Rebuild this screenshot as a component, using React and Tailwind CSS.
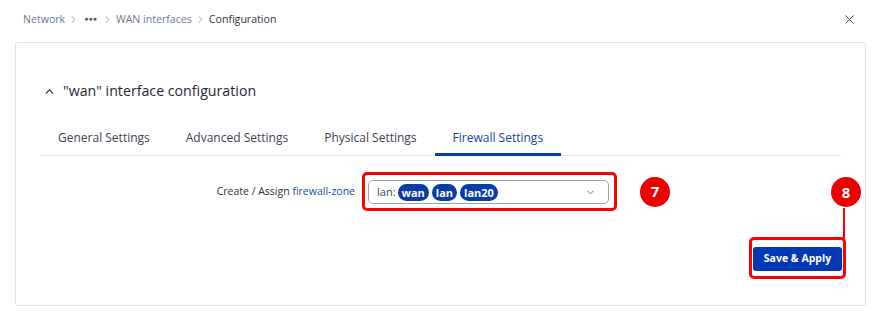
import { FiChevronDown, FiChevronUp, FiChevronRight, FiX } from 'react-icons/fi';

const tabs = ['General Settings', 'Advanced Settings', 'Physical Settings', 'Firewall Settings'];
const zones = ['wan', 'lan', 'lan20'];

const Crumb = ({ children, last }) => (
  <span className={last ? 'text-[#2c3440] font-medium' : 'text-[#6c7a8e]'}>{children}</span>
);

const Sep = () => <FiChevronRight className="w-[11px] h-[11px] text-[#6c7a8e] mx-[3px]" strokeWidth={1.6} />;

export default function App() {
  const active = 3;

  return (
    <div className="w-[878px] h-[324px] bg-white relative font-['Open_Sans',sans-serif] overflow-hidden">
      {/* header */}
      <div className="h-[42px] flex items-start justify-between pl-[23px] pr-[21px] pt-[10px]">
        <div className="flex items-center text-[10.6px] leading-[18px]">
          <Crumb>Network</Crumb>
          <Sep />
          <span className="text-[#4a5566] text-[7px] font-bold px-[2px]">●●●</span>
          <Sep />
          <Crumb>WAN interfaces</Crumb>
          <Sep />
          <Crumb last>Configuration</Crumb>
        </div>
        <button className="mt-[2px] text-[#4b5260]">
          <FiX className="w-[15px] h-[15px]" strokeWidth={1.6} />
        </button>
      </div>

      {/* card */}
      <div className="ml-[15px] w-[851px] h-[264px] border border-[#e0e4ea] rounded-[3px] pt-[37px] px-[24px] relative">
        <div className="flex items-center h-[22px] pl-[3px]">
          <FiChevronUp className="w-[13px] h-[13px] text-[#2c3440] mr-[7px]" strokeWidth={2.4} />
          <span className="text-[14.2px] font-medium text-[#1f2733]">"wan" interface configuration</span>
        </div>

        <div className="mt-[21px] flex border-b border-[#dfe3e9]">
          {tabs.map((t, i) => (
            <div
              key={t}
              className={`px-[18px] pt-[6px] pb-[7px] text-[12px] leading-[17px] border-b-[3px] -mb-[1px] ${
                i === active ? 'border-[#0a3bb0] text-[#183f99]' : 'border-transparent text-[#3a4352]'
              }`}
            >
              {t}
            </div>
          ))}
        </div>

        <div className="mt-[16px] flex items-center">
          <div className="w-[315px] text-right text-[10.5px] text-[#2c3440]">
            Create / Assign <span className="text-[#1d47a3]">firewall-zone</span>
          </div>
          <div className="ml-[7px] border-[3px] border-[#ff0000] rounded-[5px] pl-[3px] pr-[5px] pt-[5px] pb-[4px]">
            <div className="w-[241px] h-[24px] border border-[#98a3b3] rounded-[5px] flex items-center pl-[8px] pr-[12px]">
              <span className="text-[11px] text-[#3a4352] mr-[2px]">lan:</span>
              <div className="flex gap-[3px]">
                {zones.map((z) => (
                  <span
                    key={z}
                    className="h-[17px] px-[4px] rounded-full bg-[#0a3ca8] text-white text-[11px] font-bold leading-[17px]"
                  >
                    {z}
                  </span>
                ))}
              </div>
              <FiChevronDown className="ml-auto w-[11px] h-[11px] text-[#55606f]" strokeWidth={2} />
            </div>
          </div>
          <div className="ml-[23px] w-[30px] h-[30px] rounded-full bg-[#ee0000] text-white text-[15px] font-bold flex items-center justify-center">
            7
          </div>
        </div>

        <div className="mt-[26px] flex justify-end mr-[-5px]">
          <div className="border-[3px] border-[#ff0000] rounded-[5px] px-[1px] pt-[4px] pb-[5px] relative">
            <button className="w-[89px] h-[24px] rounded-[3px] bg-[#0039b3] text-white text-[10.5px] font-bold">
              Save &amp; Apply
            </button>
            <div className="absolute right-[-2px] bottom-full w-[2px] h-[32px] bg-[#ff0000]" />
          </div>
        </div>

        {/* annotation 8 */}
        <div className="absolute left-[815px] top-[134px] w-[30px] h-[30px] rounded-full bg-[#ee0000] text-white text-[15px] font-bold flex items-center justify-center">
          8
        </div>
      </div>
    </div>
  );
}
